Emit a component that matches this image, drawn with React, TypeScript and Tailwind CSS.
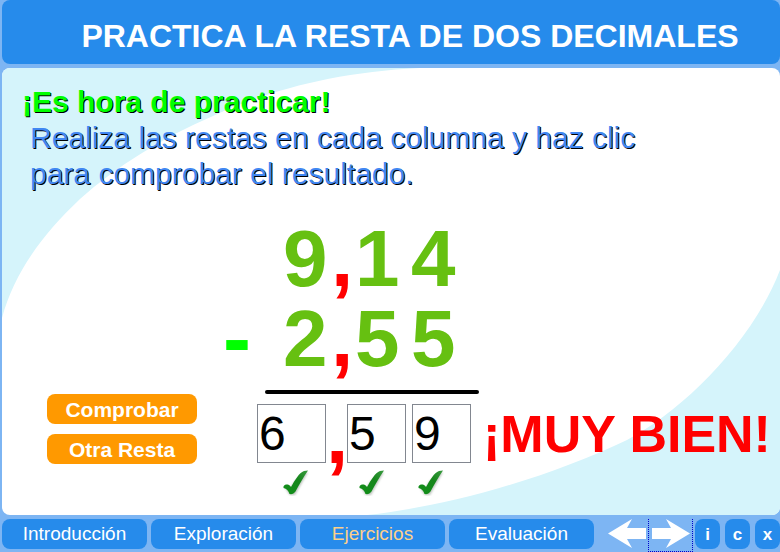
import React from "react";

const shadow = "[text-shadow:1px_1px_0_#000]";

function Tick({ className }: { className: string }) {
  return (
    <svg viewBox="0 0 26 26" className={`h-[26px] w-[26px] ${className}`} aria-hidden="true">
      <defs>
        <linearGradient id="tick" x1="0" y1="1" x2="1" y2="0">
          <stop offset="0" stopColor="#119019" />
          <stop offset="0.6" stopColor="#16861c" />
          <stop offset="1" stopColor="#3a9a40" />
        </linearGradient>
        <filter id="soft" x="-20%" y="-20%" width="140%" height="140%">
          <feGaussianBlur stdDeviation="1" />
        </filter>
      </defs>
      <path d="M2 17L7 18C11 12 17 4 25 2C21 9 17 16 12 25L7 25C5 22 3 20 2 17Z" fill="#8f9a8f" opacity="0.6" filter="url(#soft)" />
      <path d="M0.500 16.500C1.500 14.500 4 14 6 15C7 15.500 7.500 16.500 8 17C12 10 16 3 21 1L25 0.500C20.500 7 16.500 14 12.500 21.500C11 23.500 9 24.500 6.500 24C5.500 21 3.500 18.500 0.500 18Z" fill="url(#tick)" />
    </svg>
  );
}

function Arrow({ right = false }: { right?: boolean }) {
  return (
    <svg viewBox="0 0 38 29" className="h-[29px] w-[38px]" aria-hidden="true">
      <path
        d={right ? "M0 9H19L14 0L38 14.500L14 29L19 20H0Z" : "M38 9H19L24 0L0 14.500L24 29L19 20H38Z"}
        fill="#fff"
      />
    </svg>
  );
}

const sections = ["Introducción", "Exploración", "Ejercicios", "Evaluación"];
const tools = [
  { key: "i", label: "Información" },
  { key: "c", label: "Créditos" },
  { key: "x", label: "Cerrar" },
];

function Row({ digits }: { digits: string[] }) {
  return (
    <div className="grid h-20 grid-cols-[44px_28px_56px_45px] text-[80px] leading-20 font-bold text-[#66c011]">
      <span>{digits[0]}</span>
      <span className="pl-1 text-[#f00]">,</span>
      <span>{digits[1]}</span>
      <span>{digits[2]}</span>
    </div>
  );
}

function Answer({ value, label, width, tick }: { value: string; label: string; width: string; tick: string }) {
  return (
    <div className="flex flex-col gap-[7px]">
      <input
        aria-label={label}
        defaultValue={value}
        className={`h-[59px] border border-[#828790] bg-white pl-px text-5xl text-black outline-none ${width}`}
      />
      <Tick className={tick} />
    </div>
  );
}

export default function App() {
  return (
    <div className="flex min-h-screen flex-col overflow-hidden bg-[#7db5f3] pl-0.5 font-['Liberation_Sans',Arial,sans-serif]">
      <header className="flex h-16 items-center justify-center rounded-lg bg-[#268beb] pt-2 pl-[38px]">
        <h1 className="text-[32px] font-bold whitespace-nowrap text-white">PRACTICA LA RESTA DE DOS DECIMALES</h1>
      </header>

      <main className="relative mt-1 flex-1 overflow-hidden rounded-lg bg-white">
        <svg viewBox="0 0 778 447" preserveAspectRatio="none" className="absolute inset-0 h-full w-full" aria-hidden="true">
          <path d="M0 0H418C330 4 260 25 211 48C160 70 115 98 78 131C40 167 12 205 0 250Z" fill="#d5f4fb" />
          <path d="M778 447H365C450 438 550 408 625 372C680 343 750 275 778 202Z" fill="#d5f4fb" />
        </svg>

        <div className="relative pt-4 pl-5">
          <h2 className={`text-[30px] leading-9 font-bold text-[#0f0] ${shadow}`}>¡Es hora de practicar!</h2>
          <p className={`max-w-[640px] pl-2 text-[30px] leading-9 text-[#4187f2] ${shadow}`}>
            Realiza las restas en cada columna y haz clic para comprobar el resultado.
          </p>
        </div>

        <div className="relative flex pt-6">
          <div className="flex w-[255px] flex-col pl-[45px]">
            <span className="h-[178px] pt-[82px] pr-1.5 text-right text-[84px] leading-20 font-bold text-[#0f0]">-</span>
            <div className="flex flex-col gap-2.5">
              <button className="h-[30px] w-[150px] rounded-lg bg-[#ff9900] pb-0.5 text-[21px] font-bold text-white">Comprobar</button>
              <button className="h-[30px] w-[150px] rounded-lg bg-[#ff9900] pb-0.5 text-[21px] font-bold text-white">Otra Resta</button>
            </div>
          </div>

          <div className="pt-[3px]">
            <div className="pl-[26px]">
              <Row digits={["9", "1", "4"]} />
              <Row digits={["2", "5", "5"]} />
            </div>
            <div className="mt-[11px] ml-2 h-1 w-[214px] rounded-full bg-black" />
            <div className="mt-2.5 flex">
              <Answer value="6" label="Unidades" width="w-[69px]" tick="ml-[26px]" />
              <span className="w-[21px] text-center text-[80px] leading-16 font-bold text-[#f00]">,</span>
              <div className="flex gap-1.5">
                <Answer value="5" label="Décimas" width="w-[59px]" tick="ml-3" />
                <Answer value="9" label="Centésimas" width="w-[59px]" tick="ml-1.5" />
              </div>
            </div>
          </div>

          <p className="pt-[190px] pl-1 text-[52px] leading-14 font-bold whitespace-nowrap text-[#f00]">¡MUY BIEN!</p>
        </div>
      </main>

      <footer className="flex h-[37px] items-start pt-1">
        <nav className="flex gap-1">
          {sections.map((name) => (
            <button
              key={name}
              className={`h-[30px] w-[145px] rounded-lg bg-[#268beb] text-[19px] ${name === "Ejercicios" ? "text-[#fdd08a]" : "text-white"}`}
            >
              {name}
            </button>
          ))}
        </nav>
        <div className="mr-0.5 ml-auto flex items-start gap-0.5">
          <button aria-label="Anterior"><Arrow /></button>
          <button aria-label="Siguiente" className="flex h-[33px] w-[45px] justify-center border border-t-0 border-dotted border-[#00c]"><Arrow right /></button>
        </div>
        <div className="flex gap-[5px]">
          {tools.map((t) => (
            <button key={t.key} aria-label={t.label} className="h-[30px] w-[25px] rounded-lg bg-[#268beb] pt-0.5 text-[17px] font-bold text-white">
              {t.key}
            </button>
          ))}
        </div>
      </footer>
    </div>
  );
}
